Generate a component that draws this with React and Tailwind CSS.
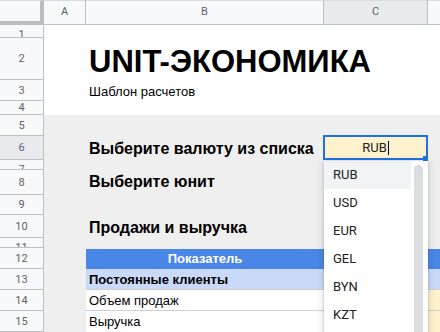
import React from "react";

const HB = "border-[#c0c0c0]";

function RowHead({ n, short, sel }) {
  return (
    <div
      className={`w-[44px] shrink-0 h-full border-r border-b ${HB} ${sel ? "bg-[#e8eaed]" : "bg-[#f8f9fa]"} flex justify-center overflow-hidden font-['Roboto',sans-serif] text-[11px] leading-[13px] text-[#5f6368] ${short ? "items-start pt-[3px]" : "items-center"}`}
    >
      {n}
    </div>
  );
}

function Row({ n, h, short, sel, bg, children }) {
  return (
    <div className="flex" style={{ height: h }}>
      <RowHead n={n} short={short} sel={sel} />
      <div className={`flex flex-1 h-full ${bg || ""}`}>{children}</div>
    </div>
  );
}

const A = ({ children, className = "" }) => (
  <div className={`w-[42px] shrink-0 h-full ${className}`}>{children}</div>
);
const B = ({ children, className = "" }) => (
  <div className={`w-[238px] shrink-0 h-full ${className}`}>{children}</div>
);
const C = ({ children, className = "" }) => (
  <div className={`w-[104px] shrink-0 h-full ${className}`}>{children}</div>
);
const D = ({ children, className = "" }) => (
  <div className={`flex-1 h-full ${className}`}>{children}</div>
);

const items = ["RUB", "USD", "EUR", "GEL", "BYN", "KZT", "UAH"];

export default function App() {
  return (
    <div className="w-[440px] h-[332px] overflow-hidden bg-white font-['Liberation_Sans',Arial,sans-serif] text-black">
      {/* column headers */}
      <div className="flex h-[25px] font-['Roboto',sans-serif] text-[11px] text-[#5f6368]">
        <div className="w-[44px] shrink-0 h-full bg-[#f8f9fa] border-t border-[#dadce0] border-r-[4px] border-b-[4px] border-r-[#bdbdbd] border-b-[#bdbdbd]" />
        <div className={`w-[42px] shrink-0 h-full bg-[#f8f9fa] border-t border-t-[#dadce0] border-r border-b ${HB} flex items-center justify-center`}>
          A
        </div>
        <div className={`w-[238px] shrink-0 h-full bg-[#f8f9fa] border-t border-t-[#dadce0] border-r border-b ${HB} flex items-center justify-center`}>
          B
        </div>
        <div className={`w-[104px] shrink-0 h-full bg-[#e8eaed] border-t border-t-[#dadce0] border-r border-b ${HB} flex items-center justify-center`}>
          C
        </div>
        <div className={`flex-1 h-full bg-[#f8f9fa] border-t border-t-[#dadce0] border-b ${HB}`} />
      </div>

      <Row n={1} h={13} short />
      <Row n={2} h={42}>
        <A />
        <B className="flex items-end pl-[3px] pb-[1px]">
          <span className="whitespace-nowrap text-[31px] leading-[35px] font-bold">UNIT-ЭКОНОМИКА</span>
        </B>
      </Row>
      <Row n={3} h={21}>
        <A />
        <B className="flex items-end pl-[3px] pb-[1px]">
          <span className="whitespace-nowrap text-[13px] leading-[16px]">Шаблон расчетов</span>
        </B>
      </Row>
      <Row n={4} h={14} />
      <Row n={5} h={21} bg="bg-[#efefef]" />
      <Row n={6} h={24} sel bg="bg-[#efefef]">
        <A />
        <B className="flex items-end pl-[3px] pb-[1px]">
          <span className="whitespace-nowrap text-[16px] leading-[20px] font-bold">Выберите валюту из списка</span>
        </B>
        <C className="relative">
          <div className="absolute left-[-1px] top-[-1px] w-[105px] h-[25px] border-2 border-[#1a73e8] bg-[#fff2cc] flex items-center justify-center z-10">
            <span className="font-['Roboto',sans-serif] text-[13px] leading-[16px] text-[#202124]">RUB</span>
            <span className="w-px h-[14px] bg-black ml-px" />
            <div className="absolute right-[-2px] bottom-[-3px] w-[5px] h-[5px] bg-[#1a73e8]" />
          </div>
          <div className="absolute left-0 top-[25px] w-[104px] h-[200px] bg-white z-20 flex shadow-[0_2px_6px_2px_rgba(60,64,67,0.15),0_1px_2px_0_rgba(60,64,67,0.3)]">
            <div className="w-[87px] shrink-0 flex flex-col">
              {items.map((it, i) => (
                <div
                  key={it}
                  className={`h-[28px] shrink-0 flex items-center pl-[9px] font-['Roboto',sans-serif] text-[13px] text-[#202124] ${i === 0 ? "bg-[#f1f3f4]" : ""}`}
                >
                  {it}
                </div>
              ))}
            </div>
            <div className="flex-1 pl-[3px] pt-[4px]">
              <div className="w-[9px] h-[190px] rounded-full bg-[#dadce0]" />
            </div>
          </div>
        </C>
      </Row>
      <Row n={7} h={10} short bg="bg-[#efefef]" />
      <Row n={8} h={25} bg="bg-[#efefef]">
        <A />
        <B className="flex items-end pl-[3px] pb-[3px]">
          <span className="whitespace-nowrap text-[16px] leading-[20px] font-bold">Выберите юнит</span>
        </B>
      </Row>
      <Row n={9} h={20} bg="bg-[#efefef]" />
      <Row n={10} h={23} bg="bg-[#efefef]">
        <A />
        <B className="flex items-end pl-[3px]">
          <span className="whitespace-nowrap text-[16px] leading-[20px] font-bold">Продажи и выручка</span>
        </B>
      </Row>
      <Row n={11} h={10} short bg="bg-[#efefef]" />
      <Row n={12} h={21} bg="bg-[#efefef]">
        <A />
        <B className="bg-[#4a86e8] border-t border-[#efefef] flex items-end justify-center pb-[2px]">
          <span className="text-[13px] leading-[16px] font-bold text-white">Показатель</span>
        </B>
        <C className="bg-[#4a86e8] border-t border-[#efefef]" />
        <D className="bg-[#4a86e8] border-t border-[#efefef]" />
      </Row>
      <Row n={13} h={21} bg="bg-[#efefef]">
        <A />
        <B className="bg-[#c9daf8] border-b border-[#d0d0d0] flex items-end pl-[3px] pb-[1px]">
          <span className="whitespace-nowrap text-[13px] leading-[16px] font-bold">Постоянные клиенты</span>
        </B>
        <C className="bg-[#c9daf8] border-b border-[#d0d0d0]" />
        <D className="bg-[#c9daf8] border-b border-[#d0d0d0]" />
      </Row>
      <Row n={14} h={21} bg="bg-[#efefef]">
        <A />
        <B className="bg-white border-b border-[#d0d0d0] flex items-end pl-[3px] pb-[1px]">
          <span className="whitespace-nowrap text-[13px] leading-[16px]">Объем продаж</span>
        </B>
        <C className="bg-[#fff2cc] border-b border-[#d0d0d0]" />
        <D className="bg-[#fff2cc] border-b border-[#d0d0d0]" />
      </Row>
      <Row n={15} h={21} bg="bg-[#efefef]">
        <A />
        <B className="bg-white flex items-end pl-[3px] pb-[2px]">
          <span className="whitespace-nowrap text-[13px] leading-[16px]">Выручка</span>
        </B>
        <C className="bg-[#fff2cc]" />
        <D className="bg-[#fff2cc]" />
      </Row>
    </div>
  );
}
